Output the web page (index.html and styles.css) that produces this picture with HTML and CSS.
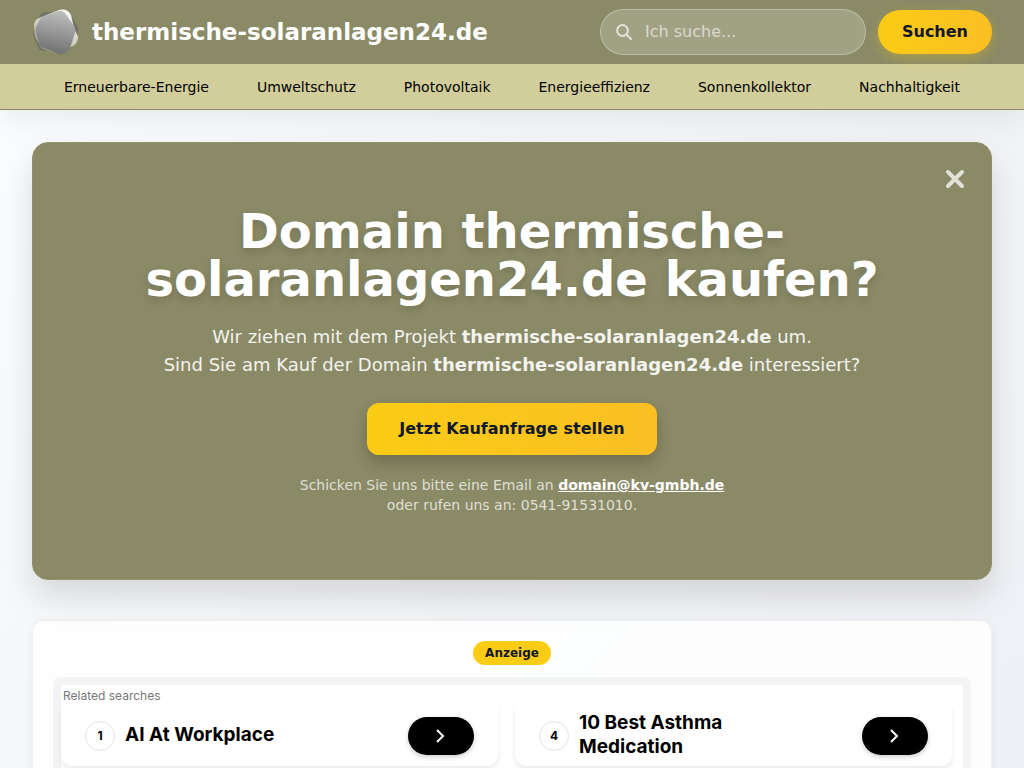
FILE: index.html
```html
<!DOCTYPE html>
<html lang="de">
<head>
<meta charset="utf-8">
<meta name="viewport" content="width=device-width, initial-scale=1">
<title>thermische-solaranlagen24.de</title>
<link rel="stylesheet" href="styles.css">
</head>
<body>
<header class="site-header">
  <div class="topbar">
    <a class="brand" href="#">
      <svg class="brand-logo" viewBox="0 0 48 48" aria-hidden="true">
        <defs>
          <linearGradient id="front" x1="0.6" y1="0" x2="0.4" y2="1"><stop offset="0" stop-color="#bebebe"/><stop offset="1" stop-color="#6e6e6e"/></linearGradient>
          <linearGradient id="light" x1="0.8" y1="0" x2="0.2" y2="1"><stop offset="0" stop-color="#ffffff"/><stop offset="0.6" stop-color="#c9c9bd"/><stop offset="1" stop-color="#8a8a7a"/></linearGradient>
        </defs>
        <path d="M8 7Q10 4 15 4L34 5Q38 5 40 9L46 19Q47 22 45 26L38 40Q36 43 32 43L12 43Q8 43 6 39L2 30Q1 27 2 24Z" fill="#6c6c66" opacity=".8"/>
        <path d="M2 17Q2 12 7 10L27 2Q35 0 39 7L42 20L46 29Q46 35 41 38L25 44Q12 44 8 38L3 29Z" fill="url(#light)"/>
        <path d="M8 11Q9 9 12 8L26 3Q30 2 33 5L42 18Q44 21 43 25L38 40Q34 47 27 46L12 40Q8 39 7 35L4 25Q3 22 4 19Z" fill="url(#front)"/>
      </svg>
      <span>thermische-solaranlagen24.de</span>
    </a>
    <form class="search" role="search">
      <div class="search-field">
        <svg class="search-icon" viewBox="0 0 16 16" aria-hidden="true"><circle cx="6.5" cy="6.5" r="5.4"/><path d="M10.6 10.6L15 15"/></svg>
        <input type="text" class="search-input" placeholder="Ich suche..." aria-label="Ich suche...">
      </div>
      <button type="submit" class="search-button">Suchen</button>
    </form>
  </div>
  <nav class="nav">
    <a href="#">Erneuerbare-Energie</a>
    <a href="#">Umweltschutz</a>
    <a href="#">Photovoltaik</a>
    <a href="#">Energieeffizienz</a>
    <a href="#">Sonnenkollektor</a>
    <a href="#">Nachhaltigkeit</a>
  </nav>
</header>
<main class="page">
  <section class="offer">
    <button type="button" class="close" aria-label="Schließen"><svg viewBox="0 0 20 20" aria-hidden="true"><path d="M3 3L17 17M17 3L3 17"/></svg></button>
    <h1>Domain thermische-solaranlagen24.de kaufen?</h1>
    <p class="lead">Wir ziehen mit dem Projekt <strong>thermische-solaranlagen24.de</strong> um.<br>Sind Sie am Kauf der Domain <strong>thermische-solaranlagen24.de</strong> interessiert?</p>
    <a class="cta" href="#">Jetzt Kaufanfrage stellen</a>
    <p class="contact">Schicken Sie uns bitte eine Email an <a href="mailto:domain@kv-gmbh.de">domain@kv-gmbh.de</a><br>oder rufen uns an: 0541-91531010.</p>
  </section>
  <section class="ads">
    <span class="badge">Anzeige</span>
    <div class="ads-frame">
      <p class="related">Related searches</p>
      <div class="results">
        <a class="result" href="#">
          <span class="number">1</span>
          <span class="result-title">AI At Workplace</span>
          <span class="go"><svg viewBox="0 0 10 16" aria-hidden="true"><path d="M1 2l6 6-6 6"/></svg></span>
        </a>
        <a class="result" href="#">
          <span class="number">4</span>
          <span class="result-title">10 Best Asthma Medication</span>
          <span class="go"><svg viewBox="0 0 10 16" aria-hidden="true"><path d="M1 2l6 6-6 6"/></svg></span>
        </a>
      </div>
    </div>
  </section>
</main>
</body>
</html>
```
FILE: styles.css
```css
* { box-sizing: border-box; }
body {
  margin: 0;
  min-height: 100vh;
  background: linear-gradient(135deg, #fbfdfe 0%, #f3f4f6 55%, #eff0f6 100%);
  color: #111827;
  font-family: "DejaVu Sans", sans-serif;
  font-size: 16px;
  line-height: 24px;
}
h1, p { margin: 0; }
.site-header { box-shadow: 0 8px 32px rgba(0, 0, 0, 0.08); }
.topbar {
  display: flex;
  align-items: center;
  justify-content: space-between;
  gap: 24px;
  min-height: 64px;
  padding: 0 32px;
  background: #8a8a66;
}
.brand {
  display: flex;
  align-items: center;
  gap: 12px;
  color: #fff;
  font-size: 23px;
  font-weight: 700;
  line-height: 32px;
  text-decoration: none;
}
.brand-logo { width: 48px; height: 48px; }
.search { display: flex; align-items: center; gap: 12px; }
.search-field {
  display: flex;
  align-items: center;
  gap: 13px;
  width: 266px;
  height: 46px;
  padding: 0 15px;
  border: 1px solid rgba(255, 255, 255, 0.3);
  border-radius: 23px;
  background: rgba(255, 255, 255, 0.2);
}
.search-icon {
  flex: none;
  width: 16px;
  height: 16px;
  fill: none;
  stroke: #e2e2d9;
  stroke-width: 2;
  stroke-linecap: round;
}
.search-input {
  flex: 1;
  min-width: 0;
  padding: 0;
  border: 0;
  outline: 0;
  background: none;
  color: #fff;
  font: inherit;
}
.search-input::placeholder { color: #dadace; opacity: 1; }
.search-button {
  padding: 10px 24px;
  border: 0;
  border-radius: 22px;
  background: linear-gradient(90deg, #facc15, #fbbf24);
  box-shadow: 0 4px 12px rgba(250, 204, 21, 0.3);
  color: #111827;
  font: inherit;
  font-weight: 700;
}
.nav {
  display: flex;
  flex-wrap: wrap;
  justify-content: space-between;
  padding: 13px 64px 12px;
  border-bottom: 1px solid #8a8a66;
  background: #d1ce9b;
  font-size: 14px;
  line-height: 20px;
}
.nav a { color: #000; text-decoration: none; }
.page {
  display: flex;
  flex-direction: column;
  gap: 40px;
  padding: 32px;
}
.offer {
  position: relative;
  padding: 64px;
  border: 1px solid #92926c;
  border-radius: 16px;
  background: #8a8a66;
  box-shadow: 0 16px 32px rgba(0, 0, 0, 0.13);
  color: #f3f3ef;
  text-align: center;
}
.close {
  position: absolute;
  top: 24px;
  right: 24px;
  display: flex;
  padding: 2px;
  border: 0;
  background: none;
}
.close svg { width: 20px; height: 20px; fill: none; stroke: #e1e1d8; stroke-width: 4; stroke-linecap: round; }
h1 {
  margin-bottom: 20px;
  color: #fff;
  font-size: 48px;
  font-weight: 700;
  line-height: 48px;
  text-shadow: 0 4px 8px rgba(0, 0, 0, 0.14);
}
.lead { margin-bottom: 24px; font-size: 18px; line-height: 28px; }
.cta {
  display: inline-block;
  padding: 14px 32px;
  border-radius: 12px;
  background: linear-gradient(90deg, #facc15, #fbbf24);
  box-shadow: 0 8px 16px rgba(0, 0, 0, 0.2);
  color: #111827;
  font-weight: 700;
  text-decoration: none;
  vertical-align: top;
}
.contact { margin-top: 20px; color: #dfdfd5; font-size: 14px; line-height: 20px; }
.contact a { color: #fff; font-weight: 700; }
.ads {
  display: flex;
  flex-direction: column;
  align-items: center;
  gap: 12px;
  padding: 20px;
  border: 1px solid #eeeff3;
  border-radius: 12px;
  background: rgba(255, 255, 255, 0.85);
  box-shadow: 0 2px 8px rgba(0, 0, 0, 0.06);
}
.badge {
  padding: 0 12px;
  border-radius: 12px;
  background: #facc15;
  font-size: 12px;
  font-weight: 700;
}
.ads-frame {
  align-self: stretch;
  padding-bottom: 16px;
  border: 8px solid #f3f4f6;
  border-radius: 8px;
  background: #fff;
  font-family: Inter, sans-serif;
}
.related { padding: 0 2px; color: #777; font-size: 12px; line-height: 21px; }
.results {
  display: grid;
  grid-template-columns: 1fr 1fr;
  gap: 17px;
  padding-right: 11px;
}
.result {
  display: flex;
  align-items: center;
  gap: 10px;
  min-height: 60px;
  padding: 0 24px;
  border-radius: 0 0 12px 12px;
  box-shadow: 0 4px 6px rgba(0, 0, 0, 0.08);
  color: #000;
  text-decoration: none;
}
.number {
  flex: none;
  width: 30px;
  height: 30px;
  border: 1px solid #e3e3e7;
  border-radius: 50%;
  font-size: 12px;
  font-weight: 700;
  line-height: 28px;
  text-align: center;
}
.result-title { flex: 1; padding: 5px 40px 7px 0; font-size: 19px; font-weight: 700; }
.go {
  display: flex;
  align-items: center;
  justify-content: center;
  width: 66px;
  height: 38px;
  border-radius: 19px;
  background: #000;
  box-shadow: 0 2px 5px rgba(0, 0, 0, 0.2);
}
.go svg { width: 10px; height: 16px; fill: none; stroke: #fff; stroke-width: 2; }
```
